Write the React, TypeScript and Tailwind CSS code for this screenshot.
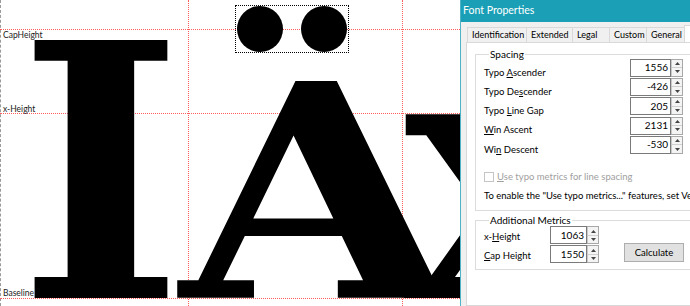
import React from "react";

const ui = { fontFamily: 'Lato, "Noto Sans", sans-serif' };
const glyphFont = { fontFamily: '"DejaVu Serif", serif' };

function Spin() {
  return (
    <div className="flex h-full w-[11px] flex-col border-l border-[#c8c8c8] bg-[#f4f4f4]">
      <div className="flex flex-1 items-center justify-center border-b border-[#d0d0d0]">
        <svg width="5" height="3" viewBox="0 0 5 3">
          <path d="M0 3 L2.5 0 L5 3 Z" fill="#444" />
        </svg>
      </div>
      <div className="flex flex-1 items-center justify-center">
        <svg width="5" height="3" viewBox="0 0 5 3">
          <path d="M0 0 L2.5 3 L5 0 Z" fill="#444" />
        </svg>
      </div>
    </div>
  );
}

function NumBox({ value, w }: { value: string; w: string }) {
  return (
    <div className="flex h-[18px] shrink-0 items-stretch">
      <div className={`flex h-full ${w} items-center justify-end border border-[#7a7a7a] bg-white pr-[2px] text-[10px] text-black`}>
        {value}
      </div>
      <div className="h-full border-y border-r border-[#a8a8a8]">
        <Spin />
      </div>
    </div>
  );
}

function Row({ label, value }: { label: React.ReactNode; value: string }) {
  return (
    <div className="flex h-[19.3px] w-[199px] items-center justify-between">
      <span className="pt-[10px]">{label}</span>
      <NumBox value={value} w="w-[41px]" />
    </div>
  );
}

function Canvas() {
  return (
    <div className="relative h-full w-[460px] shrink-0 overflow-hidden bg-white">
      {/* guides */}
      <div className="absolute left-0 top-0 h-full border-l border-dashed border-[#9a9a9a]" />
      <div className="absolute left-0 top-[29px] w-full border-t border-dotted border-[#ff5c5c]" />
      <div className="absolute left-0 top-[113px] w-full border-t border-dotted border-[#ff5c5c]" />
      <div className="absolute left-0 top-[298px] w-full border-t border-dotted border-[#ff5c5c]" />
      <div className="absolute left-[188px] top-0 h-full border-l border-dotted border-[#ff5c5c]" />
      <div className="absolute left-[402px] top-0 h-full border-l border-dotted border-[#ff5c5c]" />

      <span style={ui} className="absolute left-[3px] top-[30px] text-[8.5px] leading-[10px] text-[#222]">CapHeight</span>
      <span style={ui} className="absolute left-[3px] top-[104px] text-[8.5px] leading-[10px] text-[#222]">x-Height</span>
      <span style={ui} className="absolute left-[3px] top-[288px] text-[8.5px] leading-[10px] text-[#222]">Baseline</span>

      {/* glyphs */}
      <span style={glyphFont} className="absolute left-[18px] top-[-3px] text-[354px] font-bold leading-none text-black">
        I
      </span>
      <span style={glyphFont} className="absolute left-[180px] top-[-3px] origin-[0_300px] scale-y-[0.84] text-[354px] font-bold leading-none text-black">
        A
      </span>
      <span style={glyphFont} className="absolute left-[404px] top-[-3px] text-[354px] font-bold leading-none text-black">
        x
      </span>

      {/* diaeresis component, selected */}
      <div className="absolute left-[235px] top-[5px] flex h-[48px] w-[114px] items-center justify-between border border-dotted border-black px-[1px]">
        <div className="h-[46px] w-[46px] rounded-full bg-black" />
        <div className="h-[46px] w-[46px] rounded-full bg-black" />
      </div>
    </div>
  );
}

export default function App() {
  const tabs = [
    { t: "Identification", w: "w-[59px]" },
    { t: "Extended", w: "w-[46px]" },
    { t: "Legal", w: "w-[37px]" },
    { t: "Custom", w: "w-[37px]" },
    { t: "General", w: "w-[38px]" },
  ];
  return (
    <div className="flex h-[306px] w-[690px] overflow-hidden bg-white">
      <Canvas />
      <div style={ui} className="flex h-full w-[300px] shrink-0 flex-col border-l border-[#4fb3c5] bg-[#f0f0f0] text-[9.5px] text-black">
        <div className="flex h-[22px] items-center bg-[#1a9fb6] pl-[2px] text-[10.5px] text-white">Font Properties</div>
        <div className="flex flex-1 flex-col pl-[5px] pt-[3px]">
          <div className="flex h-[17px] items-end pl-[1px]">
            {tabs.map((tab) => (
              <div key={tab.t} className={`flex h-[15px] ${tab.w} items-center overflow-hidden whitespace-nowrap border border-b-0 border-r-0 border-[#d9d9d9] bg-[#f0f0f0] pl-[4px] text-[9px]`}>
                {tab.t}
              </div>
            ))}
            <div className="h-[17px] w-[30px] border border-b-0 border-[#d9d9d9] bg-white" />
          </div>
          <div className="flex-1 border border-[#d9d9d9] bg-white pl-[8px] pt-[5px]">
            <fieldset className="w-[260px] border border-[#dcdcdc] pb-[8px] pl-[8px]">
              <legend className="ml-[5px] px-[1px] text-[10px] leading-[12px]">Spacing</legend>
              <div className="-mt-[2px]">
                <Row label={<>Typo <u>A</u>scender</>} value="1556" />
                <Row label={<>Typo De<u>s</u>cender</>} value="-426" />
                <Row label={<>Typo <u>L</u>ine Gap</>} value="205" />
                <Row label={<><u>W</u>in Ascent</>} value="2131" />
                <Row label={<>Wi<u>n</u> Descent</>} value="-530" />
              </div>
              <div className="mt-[17px] flex h-[12px] items-center gap-[3px] text-[#a0a0a0]">
                <div className="h-[10px] w-[10px] border border-[#c4c4c4] bg-white" />
                <span><u>U</u>se typo metrics for line spacing</span>
              </div>
              <div className="mt-[7px] h-[12px] whitespace-nowrap leading-[12px]">To enable the "Use typo metrics..." features, set Version</div>
            </fieldset>
            <fieldset className="mt-[3px] w-[260px] border border-[#dcdcdc] pb-[6px] pl-[8px]">
              <legend className="ml-[5px] px-[1px] text-[10px] leading-[12px]">Additional Metrics</legend>
              <div className="flex items-start">
                <div className="flex w-[115px] flex-col gap-[1px]">
                  <div className="flex h-[18px] items-center justify-between">
                    <span className="pt-[4px]">x-<u>H</u>eight</span>
                    <NumBox value="1063" w="w-[37px]" />
                  </div>
                  <div className="flex h-[18px] items-center justify-between">
                    <span className="pt-[4px]"><u>C</u>ap Height</span>
                    <NumBox value="1550" w="w-[37px]" />
                  </div>
                </div>
                <div className="ml-[25px] mt-[17px] flex h-[19px] w-[60px] items-center justify-center border border-[#adadad] bg-[#e1e1e1]">
                  Calculate
                </div>
              </div>
            </fieldset>
          </div>
        </div>
      </div>
    </div>
  );
}
